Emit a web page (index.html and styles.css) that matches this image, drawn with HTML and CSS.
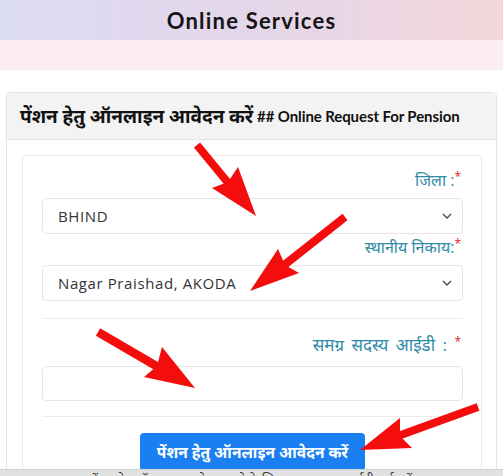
FILE: index.html
```html
<!DOCTYPE html>
<html lang="hi">
<head>
<meta charset="utf-8">
<title>Online Services</title>
<link rel="stylesheet" href="styles.css">
</head>
<body>
<header class="top">
  <h1 class="title">Online Services</h1>
</header>
<div class="band"></div>
<main class="wrap">
  <section class="card">
    <div class="card-head"><span class="hi">पेंशन हेतु ऑनलाइन आवेदन करें</span>&nbsp;<span class="en">## Online Request For Pension</span></div>
    <div class="card-body">
      <div class="inner">
        <div class="label">जिला :<span class="req">*</span></div>
        <div class="select"><span>BHIND</span>
          <svg class="chev" width="10" height="6" viewBox="0 0 10 6"><path d="M1 1l4 4 4-4" fill="none" stroke="#444" stroke-width="1.3"/></svg>
        </div>
        <div class="label">स्थानीय निकाय:<span class="req">*</span></div>
        <div class="select"><span>Nagar Praishad, AKODA</span>
          <svg class="chev" width="10" height="6" viewBox="0 0 10 6"><path d="M1 1l4 4 4-4" fill="none" stroke="#444" stroke-width="1.3"/></svg>
        </div>
        <hr class="rule rule-a">
        <div class="label label-c">समग्र सदस्य आईडी : <span class="req">*</span></div>
        <div class="input"></div>
        <hr class="rule rule-b">
        <div class="actions"><button class="btn">पेंशन हेतु ऑनलाइन आवेदन करें</button></div>
      </div>
    </div>
  </section>
</main>
<div class="bottom-bar"><span>पेंशन हेतु ऑनलाइन आवेदन करने के लिए समग्र सदस्य आईडी दर्ज करें</span></div>
<svg class="arrows" width="503" height="476" viewBox="0 0 503 476">
  <g fill="#f40d0d" stroke="#f40d0d" stroke-linecap="butt">
    <line x1="197" y1="145" x2="229" y2="184" stroke-width="8"/>
    <polygon points="256,216 212,188 228,182 238,167" stroke="none"/>
    <line x1="345" y1="217" x2="283" y2="266" stroke-width="8"/>
    <polygon points="250,291 278,249 285,265 299,273" stroke="none"/>
    <line x1="98" y1="332" x2="158" y2="367" stroke-width="8.5"/>
    <polygon points="195,388 162,347 157,366 144,377" stroke="none"/>
    <line x1="478" y1="407" x2="398" y2="436" stroke-width="8"/>
    <polygon points="360,450 400,418 400,436 412,448" stroke="none"/>
  </g>
</svg>
</body>
</html>
```
FILE: styles.css
```css
html, body {
  margin: 0;
  padding: 0;
  overflow: hidden;
  background: #ffffff;
}
body {
  font-family: "Open Sans", "Noto Sans", "Liberation Sans", sans-serif;
  color: #222;
  width: 503px;
  height: 476px;
  position: relative;
}
.top {
  height: 40px;
  background: linear-gradient(90deg, #dcdcf3 0%, #e4d6ea 50%, #f3d6da 100%);
  display: flex;
  align-items: center;
  justify-content: center;
}
.title {
  margin: 0;
  font-family: "Lato", "Liberation Sans", sans-serif;
  font-weight: 700;
  font-size: 22px;
  letter-spacing: 1.2px;
  color: #151515;
}
.band {
  height: 30px;
  background: #fcedf2;
}
.wrap {
  padding: 22px 6px 0 6px;
}
.card {
  border: 1px solid #e4e4e4;
  border-radius: 4px;
  background: #fff;
}
.card-head {
  background: #f3f3f3;
  border-bottom: 1px solid #e2e2e2;
  height: 46px;
  display: flex;
  align-items: center;
  padding-left: 13px;
  font-family: "Lato", "Noto Sans", sans-serif;
  font-weight: 700;
  color: #111;
  white-space: nowrap;
}
.card-head .hi {
  font-size: 19px;
}
.card-head .en {
  font-size: 15px;
  letter-spacing: -0.1px;
}
.card-body {
  padding: 15px 14px 0 15px;
}
.inner {
  border: 1px solid #ebebeb;
  border-radius: 5px;
  padding: 14px 18px 20px 19px;
}
.label {
  text-align: right;
  color: #2f8ba6;
  font-size: 16px;
  line-height: 20px;
  margin: 0 2px 8px 0;
}
.select + .label {
  margin-top: 3px;
}
.req {
  color: #e41b23;
  font-size: 12px;
  vertical-align: top;
  line-height: 14px;
}
.select, .input {
  height: 36px;
  box-sizing: border-box;
  border: 1px solid #e6e6e6;
  border-radius: 4px;
  background: #fff;
  display: flex;
  align-items: center;
  justify-content: space-between;
  padding: 0 10px 0 15px;
  font-size: 15px;
  color: #333;
  letter-spacing: 0.6px;
}
.input {
  height: 35px;
}
.chev {
  display: block;
}
.rule {
  border: 0;
  border-top: 1px solid #ebebeb;
  margin: 0;
}
.rule-a {
  margin-top: 17px;
}
.label-c {
  margin-top: 16px;
  margin-bottom: 11px;
  font-size: 17px;
  word-spacing: 3px;
}
.rule-b {
  margin-top: 15px;
}
.actions {
  display: flex;
  padding-top: 16px;
  padding-left: 98px;
}
.btn {
  background: #1a7ff1;
  color: #fff;
  border: 0;
  border-radius: 4px;
  height: 38px;
  padding: 0 10px;
  width: 225px;
  font-family: "Noto Sans", sans-serif;
  font-weight: 700;
  font-size: 15.5px;
  white-space: nowrap;
}
.bottom-bar {
  position: absolute;
  left: 0;
  right: 0;
  bottom: 0;
  height: 6px;
  background: #e1e1e1;
  border-top: 1px solid #cfcfcf;
  overflow: hidden;
  text-align: center;
  font-size: 13px;
  line-height: 22px;
  color: #333;
}
.bottom-bar span {
  display: block;
  margin-top: -2px;
}
.arrows {
  position: absolute;
  left: 0;
  top: 0;
  pointer-events: none;
}
```
